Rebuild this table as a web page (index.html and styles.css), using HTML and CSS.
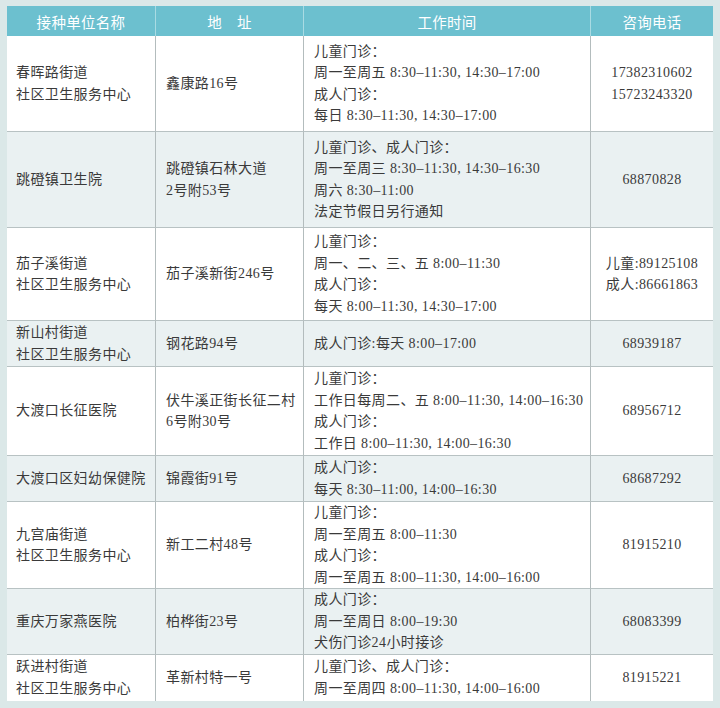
FILE: index.html
```html
<!DOCTYPE html>
<html lang="zh-CN">
<head>
<meta charset="utf-8">
<title>接种单位</title>
<link rel="stylesheet" href="styles.css">
</head>
<body>
<div class="frame">
<table class="sched">
<colgroup><col class="c1"><col class="c2"><col class="c3"><col class="c4"></colgroup>
<thead>
<tr class="head"><th>接种单位名称</th><th>地　址</th><th>工作时间</th><th>咨询电话</th></tr>
</thead>
<tbody>
<tr class="r1">
<td>春晖路街道<br>社区卫生服务中心</td>
<td>鑫康路16号</td>
<td>儿童门诊：<br>周一至周五 8:30–11:30, 14:30–17:00<br>成人门诊：<br>每日 8:30–11:30, 14:30–17:00</td>
<td class="tel">17382310602<br>15723243320</td>
</tr>
<tr class="r2 alt">
<td>跳磴镇卫生院</td>
<td>跳磴镇石林大道<br>2号附53号</td>
<td>儿童门诊、成人门诊：<br>周一至周三 8:30–11:30, 14:30–16:30<br>周六 8:30–11:00<br>法定节假日另行通知</td>
<td class="tel">68870828</td>
</tr>
<tr class="r3">
<td>茄子溪街道<br>社区卫生服务中心</td>
<td>茄子溪新街246号</td>
<td>儿童门诊：<br>周一、二、三、五 8:00–11:30<br>成人门诊：<br>每天 8:00–11:30, 14:30–17:00</td>
<td class="tel">儿童:89125108<br>成人:86661863</td>
</tr>
<tr class="r4 alt">
<td>新山村街道<br>社区卫生服务中心</td>
<td>钢花路94号</td>
<td>成人门诊:每天 8:00–17:00</td>
<td class="tel">68939187</td>
</tr>
<tr class="r5">
<td>大渡口长征医院</td>
<td>伏牛溪正街长征二村<br>6号附30号</td>
<td>儿童门诊：<br>工作日每周二、五 8:00–11:30, 14:00–16:30<br>成人门诊：<br>工作日 8:00–11:30, 14:00–16:30</td>
<td class="tel">68956712</td>
</tr>
<tr class="r6 alt">
<td>大渡口区妇幼保健院</td>
<td>锦霞街91号</td>
<td>成人门诊：<br>每天 8:30–11:00, 14:00–16:30</td>
<td class="tel">68687292</td>
</tr>
<tr class="r7">
<td>九宫庙街道<br>社区卫生服务中心</td>
<td>新工二村48号</td>
<td>儿童门诊：<br>周一至周五 8:00–11:30<br>成人门诊：<br>周一至周五 8:00–11:30, 14:00–16:00</td>
<td class="tel">81915210</td>
</tr>
<tr class="r8 alt">
<td>重庆万家燕医院</td>
<td>柏桦街23号</td>
<td>成人门诊：<br>周一至周日 8:00–19:30<br>犬伤门诊24小时接诊</td>
<td class="tel">68083399</td>
</tr>
<tr class="r9">
<td>跃进村街道<br>社区卫生服务中心</td>
<td>革新村特一号</td>
<td>儿童门诊、成人门诊：<br>周一至周四 8:00–11:30, 14:00–16:00</td>
<td class="tel">81915221</td>
</tr>
</tbody>
</table>
</div>
</body>
</html>
```
FILE: styles.css
```css
html, body {
  margin: 0;
  padding: 0;
  background: #dbe8e8;
}
body {
  width: 720px;
  height: 708px;
  overflow: hidden;
}
.frame {
  padding: 6px 7px 9px 7px;
}
.sched {
  width: 706px;
  table-layout: fixed;
  border-collapse: separate;
  border-spacing: 0;
  background: #ffffff;
  font-family: "Liberation Serif", "Noto Sans CJK SC", serif;
  font-size: 14px;
  letter-spacing: 0.4px;
  color: #3a3a3a;
}
.c1 { width: 148px; }
.c2 { width: 148px; }
.c3 { width: 287px; }
.c4 { width: 123px; }
.head th {
  height: 30px;
  box-sizing: border-box;
  background: #6cc0cf;
  color: #ffffff;
  font-family: "Noto Sans CJK SC", "Noto Sans", sans-serif;
  font-weight: normal;
  font-size: 14.5px;
  letter-spacing: 0.3px;
  text-align: center;
  vertical-align: middle;
  padding: 0;
  border-left: 1px solid #a9dbe3;
}
.head th:first-child { border-left: none; }
.sched td {
  box-sizing: border-box;
  vertical-align: middle;
  line-height: 21.5px;
  padding: 0 0 0 10px;
  border-top: 1px solid #b8c2c3;
  border-left: 1px solid #b3bcbd;
}
.sched td:first-child {
  border-left: none;
  padding-left: 9px;
}
.sched tbody tr:first-child td { border-top: none; }
.sched td.tel {
  text-align: center;
  padding-left: 0;
}
.alt td { background: #eaf1f2; }
.r1 td { height: 95px; }
.r2 td { height: 96px; }
.r3 td { height: 93px; }
.r4 td { height: 46px; }
.r5 td { height: 89px; }
.r6 td { height: 46px; }
.r7 td { height: 86px; }
.r8 td { height: 65px; }
.r9 td { height: 47px; }
```
